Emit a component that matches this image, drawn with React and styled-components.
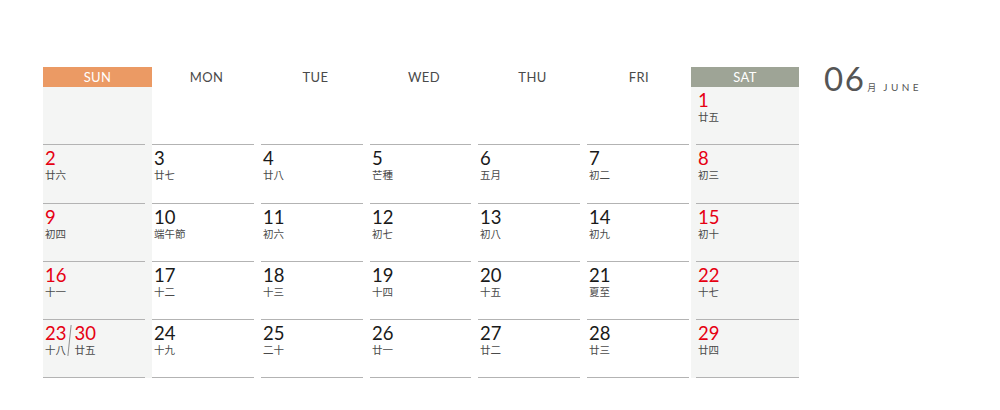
import React from 'react';
import styled, { createGlobalStyle } from 'styled-components';

const Global = createGlobalStyle`
  html, body { margin: 0; padding: 0; background: #fff; }
  body { font-family: Lato, "Noto Sans CJK TC", sans-serif; }
`;

const Page = styled.div`
  display: flex;
  align-items: flex-start;
  width: 1000px;
  height: 410px;
  box-sizing: border-box;
  padding: 67px 0 0 43px;
`;

const Grid = styled.div`
  display: grid;
  grid-template-columns: 109px 109px 109px 108px 109px 104px 108px;
  grid-template-rows: 20px repeat(5, 58.3px);
`;

const toneBg = {
  sun: '#eb9a64',
  sat: '#9ea496',
  none: 'transparent',
};

const Head = styled.div`
  display: flex;
  align-items: center;
  justify-content: center;
  background: ${(p) => toneBg[p.$tone]};
  color: ${(p) => (p.$tone === 'none' ? '#4a4a4a' : '#ffffff')};
  font-family: Lato, sans-serif;
  font-size: 13px;
  letter-spacing: 0.4px;
`;

const cellPad = { sun: '0 7px 0 0', mid: '0 7px 0 0', fri: '0 2px 0 0', sat: '0 0 0 5px' };

const Cell = styled.div`
  background: ${(p) => (p.$kind === 'sun' || p.$kind === 'sat' ? '#f4f5f4' : 'transparent')};
  padding: ${(p) => cellPad[p.$kind]};
  box-sizing: border-box;
  display: flex;
`;

const Inner = styled.div`
  flex: 1;
  border-bottom: 1px solid #b3b3b3;
  padding: 3px 0 0 2px;
  box-sizing: border-box;
`;

const Num = styled.div`
  font-family: Lato, sans-serif;
  font-weight: 400;
  font-size: 18.5px;
  line-height: 20px;
  color: ${(p) => (p.$red ? '#e60012' : '#1a1a1a')};
`;

const Lunar = styled.div`
  margin-top: 1px;
  font-family: "Noto Sans CJK TC", sans-serif;
  font-size: 10.5px;
  line-height: 12px;
  color: #4a4a4a;
`;

const Dual = styled.div`
  display: flex;
  align-items: flex-start;
`;

const Part = styled.div`
  display: flex;
  flex-direction: column;
`;

const Slash = styled.div`
  width: 1px;
  height: 31px;
  margin: 2px 4px 0 3px;
  background: #8f8f8f;
  transform: skewX(-6deg);
`;

const Title = styled.div`
  display: flex;
  align-items: baseline;
  margin: -5px 0 0 25px;
  color: #555;
`;

const Big = styled.span`
  font-family: Lato, sans-serif;
  font-weight: 400;
  font-size: 33px;
  line-height: 32px;
  letter-spacing: 1.5px;
`;

const Moon = styled.span`
  font-family: "Noto Sans CJK TC", sans-serif;
  font-size: 9px;
  margin-left: 2px;
`;

const Eng = styled.span`
  font-family: Lato, sans-serif;
  font-size: 10px;
  letter-spacing: 3.4px;
  margin-left: 7px;
`;

const heads = ['SUN', 'MON', 'TUE', 'WED', 'THU', 'FRI', 'SAT'];
const kinds = ['sun', 'mid', 'mid', 'mid', 'mid', 'fri', 'sat'];

const days = [
  null, null, null, null, null, null, ['1', '廿五'],
  ['2', '廿六'], ['3', '廿七'], ['4', '廿八'], ['5', '芒種'], ['6', '五月'], ['7', '初二'], ['8', '初三'],
  ['9', '初四'], ['10', '端午節'], ['11', '初六'], ['12', '初七'], ['13', '初八'], ['14', '初九'], ['15', '初十'],
  ['16', '十一'], ['17', '十二'], ['18', '十三'], ['19', '十四'], ['20', '十五'], ['21', '夏至'], ['22', '十七'],
  'dual', ['24', '十九'], ['25', '二十'], ['26', '廿一'], ['27', '廿二'], ['28', '廿三'], ['29', '廿四'],
];

export default function App() {
  return (
    <>
      <Global />
      <Page>
        <Grid>
          {heads.map((h, i) => (
            <Head key={h} $tone={i === 0 ? 'sun' : i === 6 ? 'sat' : 'none'}>{h}</Head>
          ))}
          {days.map((d, idx) => {
            const col = idx % 7;
            const kind = kinds[col];
            const weekend = col === 0 || col === 6;
            return (
              <Cell key={idx} $kind={kind}>
                <Inner>
                  {d === 'dual' ? (
                    <Dual>
                      <Part>
                        <Num $red>23</Num>
                        <Lunar>十八</Lunar>
                      </Part>
                      <Slash />
                      <Part>
                        <Num $red>30</Num>
                        <Lunar>廿五</Lunar>
                      </Part>
                    </Dual>
                  ) : d ? (
                    <>
                      <Num $red={weekend}>{d[0]}</Num>
                      <Lunar>{d[1]}</Lunar>
                    </>
                  ) : null}
                </Inner>
              </Cell>
            );
          })}
        </Grid>
        <Title>
          <Big>06</Big>
          <Moon>月</Moon>
          <Eng>JUNE</Eng>
        </Title>
      </Page>
    </>
  );
}
